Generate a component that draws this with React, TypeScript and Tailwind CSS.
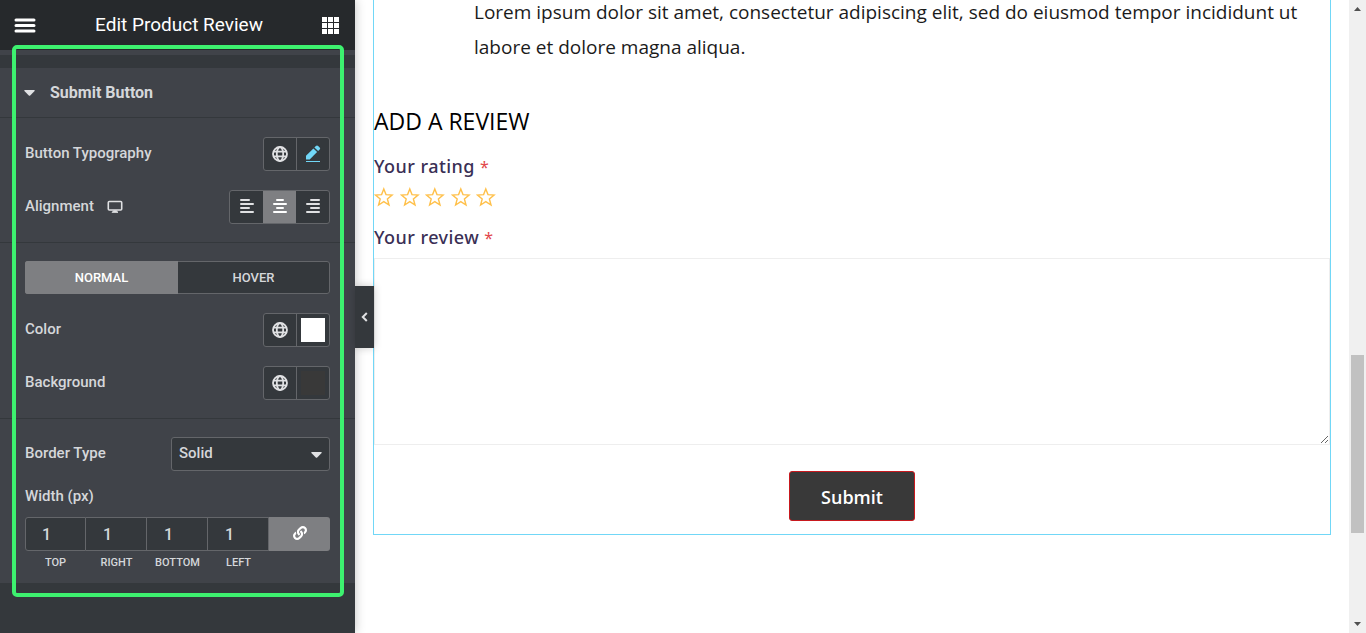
import React, { useState } from "react";
import { FaLink } from "react-icons/fa";

function Globe() {
  return (
    <svg viewBox="0 0 16 16" className="size-4" fill="none" stroke="#e0e1e3" strokeWidth="1.8" aria-hidden="true">
      <circle cx="8" cy="8" r="7" />
      <ellipse cx="8" cy="8" rx="3.2" ry="7" />
      <path d="M1.4 5.6h13.2M1.4 10.4h13.2" />
    </svg>
  );
}

function Pencil() {
  return (
    <svg viewBox="0 0 16 18" className="h-[18px] w-4" fill="#71d7f7" aria-hidden="true">
      <path d="M1 14.5v-3.7L8.4 3.4l3.7 3.7L4.7 14.5z" />
      <path d="M9.4 2.4l1.5-1.5a1.6 1.6 0 0 1 2.2 0l1.5 1.5a1.6 1.6 0 0 1 0 2.2l-1.5 1.5z" />
      <path d="M1 16h14v1H1z" />
    </svg>
  );
}

const alignPaths = {
  left: "M2 1h8M2 5h12M2 9h8M2 13h12",
  center: "M5 1h6M2 5h12M5 9h6M2 13h12",
  right: "M6 1h8M2 5h12M6 9h8M2 13h12",
};

function AlignIcon({ kind }: { kind: keyof typeof alignPaths }) {
  return (
    <svg viewBox="0 0 16 16" className="size-4" fill="none" stroke="currentColor" strokeWidth="2" strokeLinecap="round" aria-hidden="true">
      <path d={alignPaths[kind]} />
    </svg>
  );
}

function Caret() {
  return (
    <svg viewBox="0 0 11 6" className="h-[6px] w-[11px]" fill="#e0e1e3" aria-hidden="true">
      <path d="M.8 0h9.4q.8.2.4.9L6.2 5.4q-.7.7-1.4 0L.4.9Q0 .2.8 0z" />
    </svg>
  );
}

function Row({ label, children }: { label: React.ReactNode; children: React.ReactNode }) {
  return (
    <div className="flex h-[34px] items-center justify-between">
      <div className="flex items-center pb-[2px]">{label}</div>
      {children}
    </div>
  );
}

const pair = "flex h-[34px] w-[67px] divide-x divide-[#64666a] overflow-hidden rounded-[3px] border border-[#64666a] bg-[#34383c]";
const cell = "flex flex-1 items-center justify-center";

function GlobalPair({ name, children }: { name: string; children: React.ReactNode }) {
  return (
    <div className={pair}>
      <button className={cell} aria-label={"Global " + name}><Globe /></button>
      <button className={cell} aria-label={"Edit " + name}>{children}</button>
    </div>
  );
}

function Sidebar() {
  const [align, setAlign] = useState<keyof typeof alignPaths>("center");
  const [tab, setTab] = useState("Normal");
  return (
    <aside className="relative z-10 w-[355px] shrink-0 bg-[#34383c] font-['Roboto',sans-serif] text-[15px] font-medium leading-5 text-[#d5d7da] shadow-[0_0_10px_rgba(0,0,0,0.25)]">
      <header className="flex h-[50px] items-center justify-between bg-[#26292c] px-[14px] text-white">
        <button aria-label="Menu">
          <svg viewBox="0 0 22 16" className="h-4 w-[22px]" stroke="#fff" strokeWidth="3" strokeLinecap="round" aria-hidden="true">
            <path d="M2 3h18M2 8.5h18M2 14h18" />
          </svg>
        </button>
        <h1 className="text-[19px] font-normal">Edit Product Review</h1>
        <button aria-label="Widgets" className="pr-[2px]">
          <svg viewBox="0 0 17 17" className="size-[17px]" fill="#fff" aria-hidden="true">
            <path d="M0 0h5v5H0zM6 0h5v5H6zM12 0h5v5h-5zM0 6h5v5H0zM6 6h5v5H6zM12 6h5v5h-5zM0 12h5v5H0zM6 12h5v5H6zM12 12h5v5h-5z" />
          </svg>
        </button>
      </header>
      <div className="h-[5px] bg-[#404349]" />
      <div className="mt-[13px] bg-[#404349]">
        <button className="flex h-[50px] w-full items-center gap-[15px] border-b border-[#34383c] px-6 text-left text-base font-bold">
          <Caret />
          <span>Submit Button</span>
        </button>

        <section className="flex flex-col gap-[19px] border-b border-[#34383c] px-[25px] pt-[19px] pb-[18px]">
          <Row label="Button Typography">
            <GlobalPair name="typography"><Pencil /></GlobalPair>
          </Row>
          <Row
            label={
              <>
                <span>Alignment</span>
                <svg viewBox="0 0 16 14" className="mt-[2px] ml-[13px] h-[14px] w-4" fill="none" stroke="#e0e1e3" strokeWidth="1.6" aria-hidden="true">
                  <rect x="1.3" y="1.5" width="13.4" height="8.5" rx="1" />
                  <path d="M5 12.4l1.6-1.6h2.8l1.6 1.6z" fill="#e0e1e3" strokeWidth=".8" />
                </svg>
              </>
            }
          >
            <div className="flex h-[34px] w-[101px] overflow-hidden rounded-[3px] border border-[#64666a] bg-[#34383c]">
              {(["left", "center", "right"] as const).map((k) => (
                <button
                  key={k}
                  aria-label={"Align " + k}
                  aria-pressed={align === k}
                  onClick={() => setAlign(k)}
                  className={align === k ? "-my-px flex flex-1 items-center justify-center bg-[#7e7f82] text-white" : "flex flex-1 items-center justify-center text-[#e0e1e3]"}
                >
                  <AlignIcon kind={k} />
                </button>
              ))}
            </div>
          </Row>
        </section>

        <section className="flex flex-col gap-[19px] border-b border-[#34383c] px-[25px] py-[18px]">
          <div className="flex h-[33px] overflow-hidden rounded-[3px] text-[13px]">
            {["Normal", "Hover"].map((t) => (
              <button
                key={t}
                onClick={() => setTab(t)}
                className={tab === t ? "flex-1 border border-[#7e7f82] bg-[#7e7f82] uppercase text-white" : "flex-1 rounded-r-[3px] border border-l-0 border-[#64666a] bg-[#34383c] uppercase"}
              >
                {t}
              </button>
            ))}
          </div>
          <Row label="Color">
            <GlobalPair name="color"><span className="size-6 bg-white" /></GlobalPair>
          </Row>
          <Row label="Background">
            <GlobalPair name="background"><span className="size-6 bg-[#393939]" /></GlobalPair>
          </Row>
        </section>

        <section className="px-[25px] pt-[18px] pb-3">
          <Row label={<label htmlFor="border-type">Border Type</label>}>
            <div className="relative">
              <select id="border-type" defaultValue="Solid" className="h-[34px] w-[159px] appearance-none rounded-[3px] border border-[#64666a] bg-[#34383c] pr-6 pb-[2px] pl-[7px]">
                <option>Solid</option>
                <option>Dashed</option>
                <option>Dotted</option>
              </select>
              <span className="pointer-events-none absolute top-[15px] right-2"><Caret /></span>
            </div>
          </Row>
          <div className="mt-[15px]">Width (px)</div>
          <div className="mt-[11px] flex">
            {["Top", "Right", "Bottom", "Left"].map((side) => (
              <div key={side} className="group flex flex-1 flex-col">
                <input
                  id={"w-" + side}
                  defaultValue="1"
                  className="h-[34px] w-full border border-l-0 border-[#64666a] bg-[#34383c] pl-[17px] text-base group-first:rounded-l-[3px] group-first:border-l group-first:pl-4"
                />
                <label htmlFor={"w-" + side} className="mt-1 text-center text-[11px] leading-4 uppercase">{side}</label>
              </div>
            ))}
            <button aria-label="Link values" className="flex h-[34px] flex-1 items-center justify-center rounded-r-[3px] bg-[#7e7f82] pb-[2px] text-white">
              <FaLink size={14} />
            </button>
          </div>
        </section>
      </div>

      <div className="pointer-events-none absolute top-[45px] right-[11px] left-3 h-[552px] rounded-[5px] border-4 border-[#3df16f]" />
      <button aria-label="Collapse panel" className="absolute top-[286px] left-full flex h-[62px] w-[19px] items-center justify-center bg-[#34383c] shadow-[0_0_8px_rgba(0,0,0,0.2)]">
        <svg viewBox="0 0 7 10" className="h-[10px] w-[7px]" fill="none" stroke="#e0e1e3" strokeWidth="2" aria-hidden="true">
          <path d="M5.8 1L1.8 5l4 4" />
        </svg>
      </button>
    </aside>
  );
}

function Required() {
  return <span className="text-base font-normal text-[#e2474b]">*</span>;
}

const fieldLabel = "block font-['Noto_Sans',sans-serif] text-[18px] leading-7 font-medium tracking-wide text-[#3a2f55]";

function Preview() {
  return (
    <main className="min-w-0 flex-1 overflow-hidden bg-white pr-[18px] pl-[18px] font-['Open_Sans',sans-serif]">
      <div className="border border-t-0 border-[#71d7f7] pb-[13px]">
        <p className="-mt-[5px] pr-8 pl-[100px] text-[19px] leading-[35px] text-[#1b1b1b]">
          Lorem ipsum dolor sit amet, consectetur adipiscing elit, sed do eiusmod tempor incididunt ut labore et dolore magna aliqua.
        </p>
        <h2 className="mt-10 text-[23px] leading-8 text-black">ADD A REVIEW</h2>
        <div className={fieldLabel + " mt-[15px]"}>Your rating <Required /></div>
        <div className="mt-[7px] flex w-[122px] justify-between">
          {[1, 2, 3, 4, 5].map((n) => (
            <button key={n} aria-label={n + " stars"}>
              <svg viewBox="0 0 20 20" className="size-5" fill="none" stroke="#ffc04a" strokeWidth="1.4" strokeLinejoin="miter" aria-hidden="true">
                <path d="M9.8 2l2.2 5.6 6.1.5-4.7 3.9 1.6 6-5.2-3.3-5.2 3.3 1.6-6-4.7-3.9 6.1-.5z" />
              </svg>
            </button>
          ))}
        </div>
        <label htmlFor="review" className={fieldLabel + " mt-4"}>Your review <Required /></label>
        <textarea id="review" className="mt-[7px] block h-[187px] w-full resize-y border border-[#eeeeee]" />
        <div className="mt-[26px] flex justify-center">
          <button className="h-[50px] rounded-[3px] border border-[#c8191e] bg-[#393939] px-[31px] pt-[2px] text-[18px] font-semibold text-white">Submit</button>
        </div>
      </div>
    </main>
  );
}

function ScrollTrack() {
  return (
    <div className="flex w-[17px] shrink-0 flex-col items-center justify-between bg-[#f0f0f0] py-[7px]" aria-hidden="true">
      <svg viewBox="0 0 7 4" className="h-1 w-[7px]" fill="#505050"><path d="M0 4h7L3.5 0z" /></svg>
      <div className="flex w-full flex-1 flex-col px-[2px]">
        <div className="flex-[344]" />
        <div className="flex-[178] bg-[#c1c1c1]" />
        <div className="flex-[89]" />
      </div>
      <svg viewBox="0 0 7 4" className="h-1 w-[7px]" fill="#505050"><path d="M0 0h7L3.5 4z" /></svg>
    </div>
  );
}

export default function App() {
  return (
    <div className="flex h-screen overflow-hidden bg-white">
      <Sidebar />
      <Preview />
      <ScrollTrack />
    </div>
  );
}
